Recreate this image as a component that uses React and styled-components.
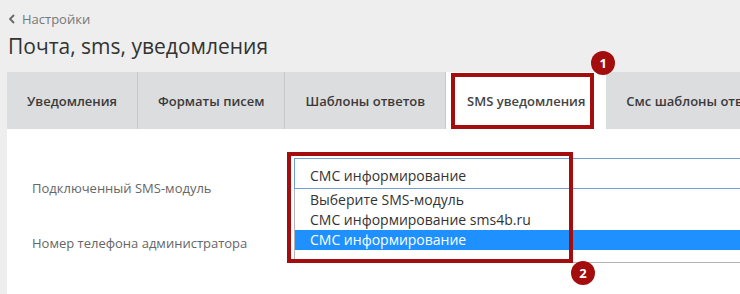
import React from 'react';
import styled, { createGlobalStyle } from 'styled-components';

const GlobalStyle = createGlobalStyle`
  html, body { margin: 0; padding: 0; background: #eeeeee; }
  body { font-family: "Open Sans", "Liberation Sans", sans-serif; }
`;

const Page = styled.div`
  width: 740px;
  height: 294px;
  overflow: hidden;
  background: #eeeeee;
  display: flex;
  flex-direction: column;
`;

const Header = styled.div`
  padding: 10px 0 0 8px;
`;

const Back = styled.a`
  display: flex;
  align-items: center;
  gap: 7px;
  font-size: 13px;
  line-height: 18px;
  color: #777;
  text-decoration: none;
  svg { margin-left: 1px; }
`;

const Title = styled.h1`
  margin: 4px 0 12px;
  font-size: 21px;
  line-height: 28px;
  font-weight: 400;
  color: #333;
`;

const Panel = styled.div`
  margin-left: 7px;
  flex: 1;
  background: #fff;
`;

const Tabs = styled.div`
  display: flex;
  height: 57px;
  background: #dcdddf;
  white-space: nowrap;
`;

const Tab = styled.div`
  position: relative;
  flex-shrink: 0;
  display: flex;
  align-items: center;
  padding: 0 20px 0 ${p => (p.$active ? 21 : 20)}px;
  font-size: 13px;
  font-weight: 600;
  color: ${p => (p.$active ? '#444' : '#3a3a3a')};
  background: ${p => (p.$active ? '#fff' : 'transparent')};
  border-right: 1px solid ${p => (p.$active ? '#fff' : '#c8c9cb')};
  &:last-child { border-right: none; }
`;

const Frame = styled.div`
  position: absolute;
  left: ${p => p.$left}px;
  top: ${p => p.$top}px;
  width: ${p => p.$width}px;
  height: ${p => p.$height}px;
  border: 4px solid #a30d0d;
  box-sizing: border-box;
  pointer-events: none;
`;

const Badge = styled.span`
  position: absolute;
  left: ${p => p.$left}px;
  top: ${p => p.$top}px;
  width: 24px;
  height: 24px;
  border-radius: 50%;
  background: #a30d0d;
  color: #fff;
  font-size: 13px;
  font-weight: 700;
  line-height: 24px;
  text-align: center;
`;

const Form = styled.div`
  padding: 29px 0 0 25px;
`;

const Row = styled.div`
  display: flex;
  height: 55px;
`;

const Label = styled.div`
  width: 262px;
  flex-shrink: 0;
  padding-top: 20px;
  font-size: 13px;
  line-height: 20px;
  color: #666;
`;

const SelectWrap = styled.div`
  position: relative;
  width: 500px;
  flex-shrink: 0;
  z-index: 2;
`;

const SelectBox = styled.div`
  height: 31px;
  box-sizing: border-box;
  border: 1px solid #6f9fd3;
  display: flex;
  align-items: center;
  padding: 3px 0 0 15px;
  font-size: 14px;
  color: #333;
`;

const Options = styled.div`
  position: absolute;
  top: 31px;
  left: 0;
  right: 0;
  background: #fff;
  border: 1px solid #b4b4b4;
  border-top: none;
  padding: 1px 0 12px;
`;

const Option = styled.div`
  height: 20px;
  line-height: 20px;
  padding-left: 15px;
  font-size: 14px;
  color: ${p => (p.$selected ? '#fff' : '#333')};
  background: ${p => (p.$selected ? '#1e90ff' : 'transparent')};
`;

const tabs = ['Уведомления', 'Форматы писем', 'Шаблоны ответов', 'SMS уведомления', 'Смс шаблоны ответов'];
const options = ['Выберите SMS-модуль', 'СМС информирование sms4b.ru', 'СМС информирование'];

export default function App() {
  return (
    <>
      <GlobalStyle />
      <Page>
        <Header>
          <Back href="#">
            <svg width="6" height="10" viewBox="0 0 6 10">
              <path d="M5 1 L1 5 L5 9" fill="none" stroke="#666" strokeWidth="1.8" />
            </svg>
            Настройки
          </Back>
          <Title>Почта, sms, уведомления</Title>
        </Header>
        <Panel>
          <Tabs>
            {tabs.map((t, i) => (
              <Tab key={t} $active={i === 3}>
                {t}
                {i === 3 && (
                  <>
                    <Frame $left={5} $top={1} $width={143} $height={56} />
                    <Badge $left={145} $top={-21}>1</Badge>
                  </>
                )}
              </Tab>
            ))}
          </Tabs>
          <Form>
            <Row>
              <Label>Подключенный SMS-модуль</Label>
              <SelectWrap>
                <SelectBox>СМС информирование</SelectBox>
                <Options>
                  {options.map((o, i) => (
                    <Option key={o} $selected={i === 2}>{o}</Option>
                  ))}
                </Options>
                <Frame $left={-7} $top={-6} $width={286} $height={111} />
                <Badge $left={277} $top={103}>2</Badge>
              </SelectWrap>
            </Row>
            <Row>
              <Label>Номер телефона администратора</Label>
            </Row>
          </Form>
        </Panel>
      </Page>
    </>
  );
}
